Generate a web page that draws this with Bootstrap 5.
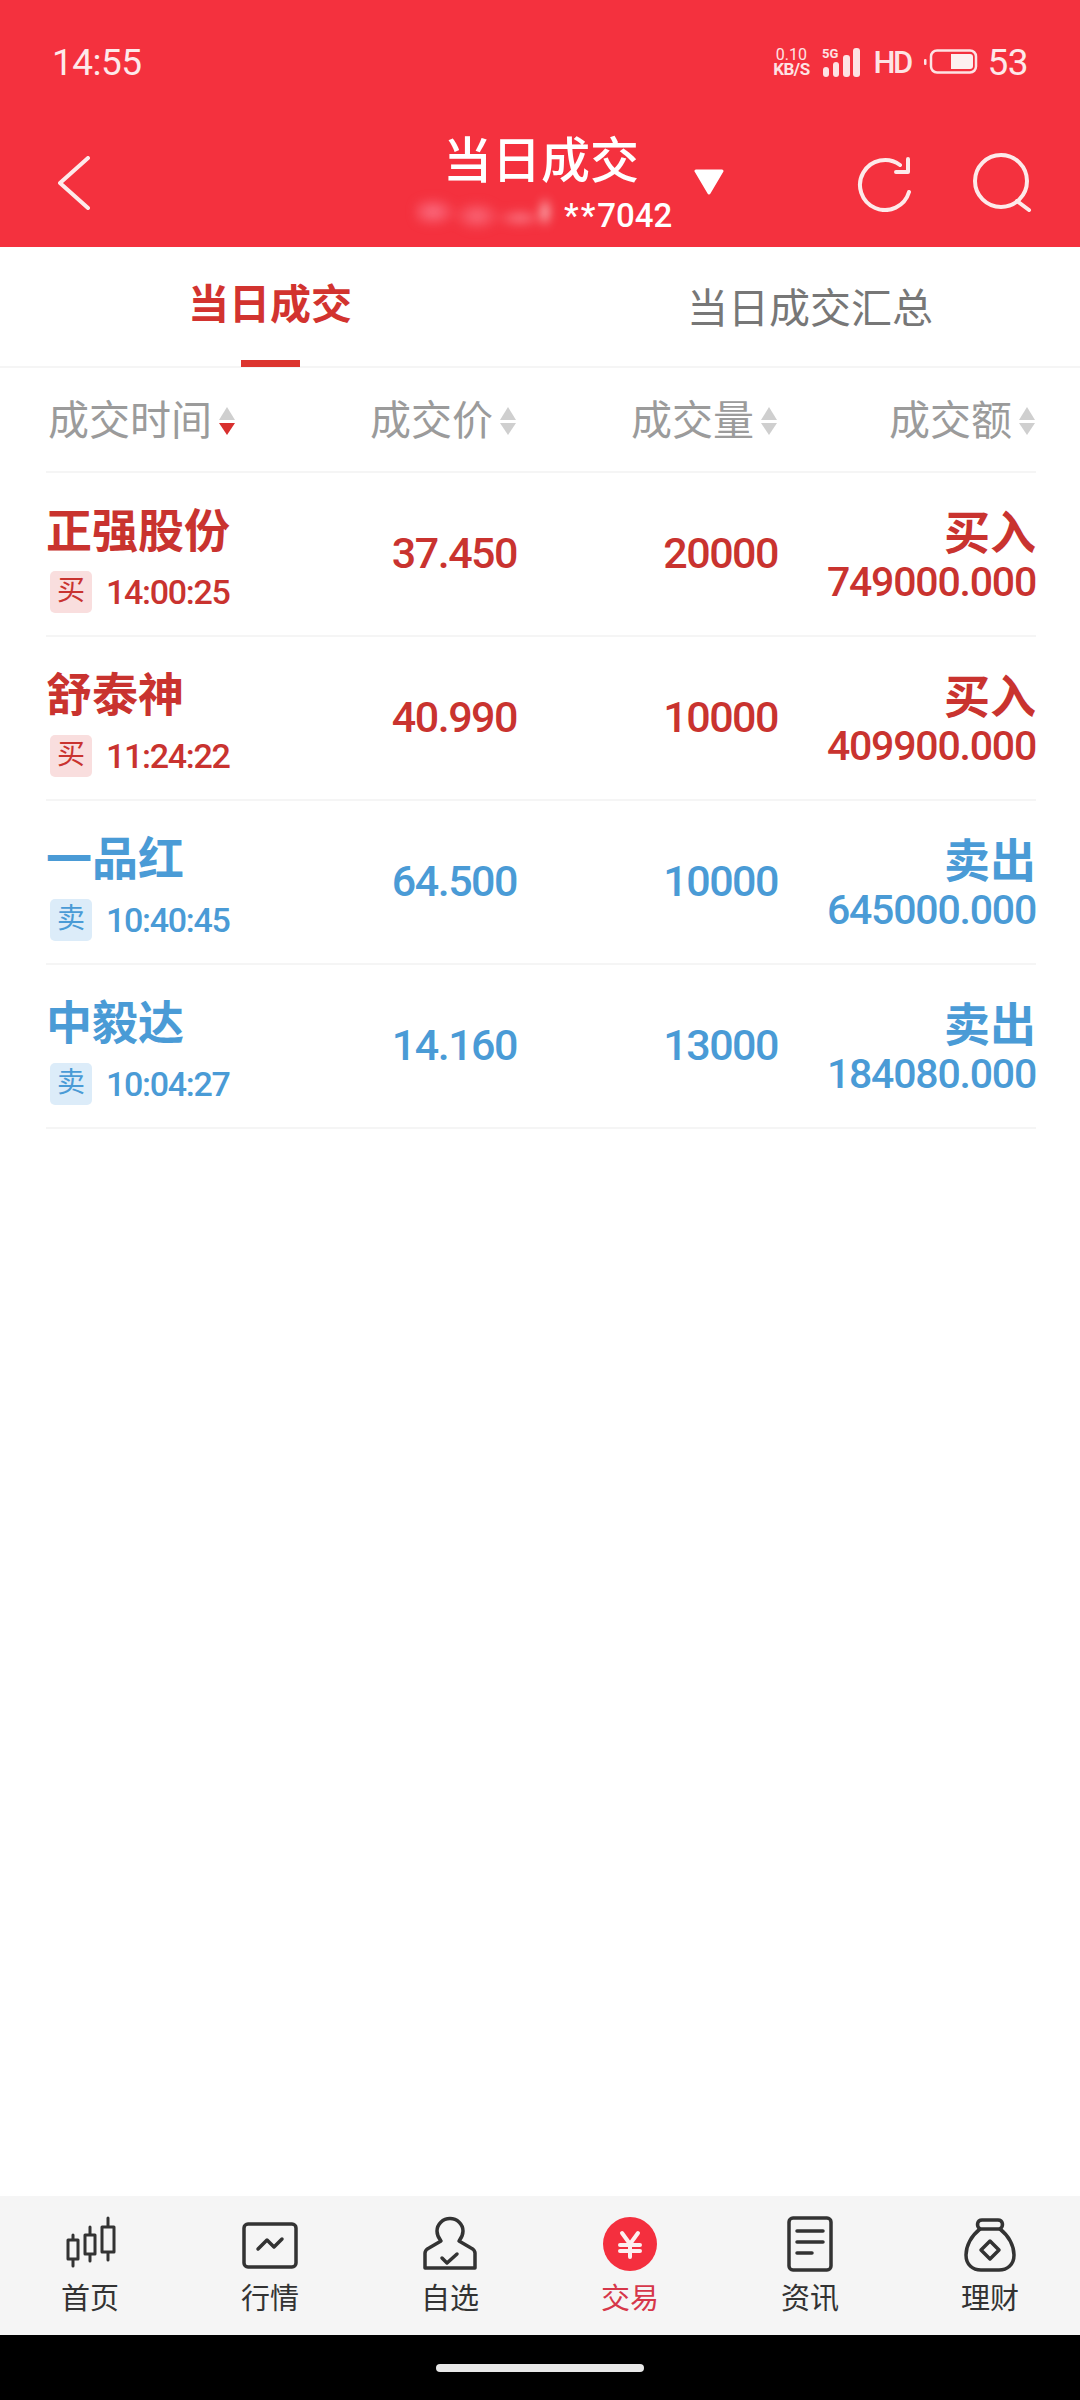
<!doctype html>
<html lang="zh">
<head>
<meta charset="utf-8">
<title>当日成交</title>
<link href="https://cdn.jsdelivr.net/npm/bootstrap@5.3.0/dist/css/bootstrap.min.css" rel="stylesheet">
<style>
html,body{margin:0;padding:0;}
body{width:1080px;height:2400px;overflow:hidden;background:#fff;font-family:Roboto,"Noto Sans CJK SC",sans-serif;}
.app-head{background:#f4313e;color:#fff;height:247px;padding-top:37px;}
.stat-row{height:50px;padding:0 52px;margin-bottom:49px;}
.clock,.batt-num{font-size:37px;line-height:1;color:#fde9ea;letter-spacing:-.5px;}
.net{width:46px;margin-left:auto;color:#fde3e4;text-align:center;white-space:nowrap;}
.net-a{font-size:16px;line-height:15px;}
.net-b{font-size:17px;line-height:15px;font-weight:700;letter-spacing:-.5px;}
.hd-txt{font-size:31px;line-height:1;font-weight:500;color:#fde3e4;margin-left:13px;width:36px;letter-spacing:-2.5px;white-space:nowrap;}
.sig{margin-left:8px;}
.batt{margin-left:15px;}
.batt-num{margin-left:9px;}
.nav-row{height:111px;padding-left:58px;}
.back-i{margin-top:20px;}
.ttl-box{width:260px;margin-left:325px;}
.ttl{font-size:49px;line-height:52px;font-weight:500;text-align:center;color:#fff;padding-right:8px;}
.sub-ttl{height:40px;margin-top:8px;font-size:33px;line-height:40px;font-weight:500;white-space:nowrap;}
.blur-name{width:138px;height:34px;margin-right:11px;filter:blur(5px);background:radial-gradient(ellipse 24px 15px at 18px 16px,#fb7286,transparent),radial-gradient(ellipse 24px 15px at 62px 20px,#f96b7c,transparent),radial-gradient(ellipse 24px 9px at 105px 22px,#fa7a88,transparent),radial-gradient(ellipse 7px 16px at 130px 16px,#fbd3d6,transparent);}
.stars{letter-spacing:2px;}
.tri-i{margin:33px 0 0 18px;}
.ref-i{margin:18px 0 0 131px;}
.srch-i{margin:17px 0 0 60px;}
.tab-bar{height:121px;border-bottom:2px solid #f5f5f5;}
.tab-cell{width:540px;height:119px;}
.tab-on{font-size:41px;font-weight:700;line-height:48px;color:#d2332f;padding-top:34px;}
.tab-off{font-size:41px;font-weight:400;line-height:48px;color:#777;padding-top:38px;}
.tab-line{width:59px;height:7px;background:#dc352f;position:absolute;left:241px;top:113px;}
.tbl{padding:0 44px 0 46px;}
.tr-head{height:105px;padding-top:3px;border-bottom:2px solid #f5f5f5;color:#9b9b9b;font-size:41px;line-height:48px;}
.c1{width:260px;}.c2{width:211px;}.c3{width:261px;}.c4{width:258px;}
.lead-h{padding-left:2px;}
.sort-i{margin-left:6px;flex:none;}
.tr-item{height:164px;border-bottom:2px solid #f5f5f5;}
.c-red{color:#c9332f;}
.c-blue{color:#4a9bd6;}
.nm{font-size:46px;line-height:50px;font-weight:700;padding-top:33px;}
.meta{margin-top:15px;height:42px;padding-left:4px;}
.tag{width:42px;height:42px;border-radius:5px;font-size:28px;line-height:40px;text-align:center;font-weight:400;margin-right:14px;letter-spacing:0;}
.tag-r{background:#f9dede;}
.tag-b{background:#dcecf9;}
.tm{font-size:34px;line-height:42px;font-weight:500;letter-spacing:-1.3px;}
.num{font-size:43px;font-weight:500;line-height:46px;padding-bottom:3px;letter-spacing:-1.5px;}
.dir{font-size:46px;line-height:50px;font-weight:700;padding-top:35px;}
.amt{font-size:41px;line-height:48px;font-weight:500;letter-spacing:-1.2px;}
.dock{height:139px;background:#f5f5f5;margin-top:auto;}
.dock-cell{width:180px;height:139px;}
.dock-ic{height:56px;margin-top:20px;}
.dock-lb{font-size:29px;line-height:36px;color:#333;margin-top:9px;}
.dock-on{color:#d6374a;}
.ink{fill:none;stroke:#333;stroke-width:3.5;stroke-linecap:round;stroke-linejoin:round;}
.homebar{height:65px;background:#000;}
.homepill{width:208px;height:8px;border-radius:4px;background:#e8e8e8;}
</style>
</head>
<body class="d-flex flex-column">
<header class="app-head">
  <div class="stat-row d-flex align-items-center">
    <span class="clock">14:55</span>
    <div class="net"><div class="net-a">0.10</div><div class="net-b">KB/S</div></div>
    <svg class="sig" width="38" height="30" viewBox="0 0 38 30" fill="#fde3e4"><text x="0" y="11" font-size="13" font-weight="700" font-family="Roboto,sans-serif">5G</text><rect x="1" y="20" width="6" height="10" rx="3"/><rect x="11" y="15" width="6" height="15" rx="3"/><rect x="21" y="8" width="7" height="22" rx="3"/><rect x="31" y="1" width="7" height="29" rx="3"/></svg>
    <span class="hd-txt">HD</span>
    <svg class="batt" width="54" height="26" viewBox="0 0 54 26"><rect x="0" y="10" width="2.5" height="6" rx="1" fill="#fde3e4"/><rect x="7" y="1.500" width="45" height="22" rx="6" fill="none" stroke="#fde3e4" stroke-width="2.500"/><path d="M27 5h19a3 3 0 0 1 3 3v9a3 3 0 0 1-3 3H27z" fill="#fdf0f0"/></svg>
    <span class="batt-num">53</span>
  </div>
  <div class="nav-row d-flex align-items-start">
    <svg class="back-i" width="32" height="54" viewBox="0 0 32 54"><polyline points="30,2 2,27 30,52" fill="none" stroke="#fdeaea" stroke-width="4" stroke-linecap="round" stroke-linejoin="round"/></svg>
    <div class="ttl-box">
      <div class="ttl">当日成交</div>
      <div class="sub-ttl d-flex"><span class="blur-name"></span><span class="stars">**</span><span>7042</span></div>
    </div>
    <svg class="tri-i" width="32" height="26" viewBox="0 0 32 26"><path d="M3 2h26l-13 22z" fill="#fff" stroke="#fff" stroke-width="3" stroke-linejoin="round"/></svg>
    <svg class="ref-i" width="56" height="58" viewBox="0 0 56 58"><path d="M53 38A25 25 0 1 1 44 11" fill="none" stroke="#fdeaea" stroke-width="4" stroke-linecap="round"/><polyline points="52,5 52,18 40,18" fill="none" stroke="#fdeaea" stroke-width="4" stroke-linecap="round" stroke-linejoin="round"/></svg>
    <svg class="srch-i" width="60" height="60" viewBox="0 0 60 60"><circle cx="29" cy="28" r="26" fill="none" stroke="#fdeaea" stroke-width="4"/><line x1="45" y1="48" x2="57" y2="57" stroke="#fdeaea" stroke-width="4" stroke-linecap="round"/></svg>
  </div>
</header>

<nav class="tab-bar d-flex position-relative">
  <div class="tab-cell text-center tab-on">当日成交</div>
  <div class="tab-cell text-center tab-off">当日成交汇总</div>
  <span class="tab-line"></span>
</nav>

<main class="tbl">
  <div class="tr-head d-flex align-items-center">
    <div class="c1 lead-h d-flex align-items-center">成交时间<svg class="sort-i" width="18" height="28" viewBox="0 0 18 28"><path d="M9 0l8 13H1z" fill="#cfcfcf"/><path d="M1 16h16l-8 12z" fill="#d8302e"/></svg></div>
    <div class="c2 d-flex align-items-center justify-content-end">成交价<svg class="sort-i" width="18" height="28" viewBox="0 0 18 28"><path d="M9 0l8 13H1z" fill="#cfcfcf"/><path d="M1 16h16l-8 12z" fill="#cfcfcf"/></svg></div>
    <div class="c3 d-flex align-items-center justify-content-end">成交量<svg class="sort-i" width="18" height="28" viewBox="0 0 18 28"><path d="M9 0l8 13H1z" fill="#cfcfcf"/><path d="M1 16h16l-8 12z" fill="#cfcfcf"/></svg></div>
    <div class="c4 d-flex align-items-center justify-content-end">成交额<svg class="sort-i" width="18" height="28" viewBox="0 0 18 28"><path d="M9 0l8 13H1z" fill="#cfcfcf"/><path d="M1 16h16l-8 12z" fill="#cfcfcf"/></svg></div>
  </div>

  <div class="tr-item d-flex c-red">
    <div class="c1"><div class="nm">正强股份</div><div class="meta d-flex"><span class="tag tag-r">买</span><span class="tm">14:00:25</span></div></div>
    <div class="c2 d-flex align-items-center justify-content-end num">37.450</div>
    <div class="c3 d-flex align-items-center justify-content-end num">20000</div>
    <div class="c4 text-end"><div class="dir">买入</div><div class="amt">749000.000</div></div>
  </div>
  <div class="tr-item d-flex c-red">
    <div class="c1"><div class="nm">舒泰神</div><div class="meta d-flex"><span class="tag tag-r">买</span><span class="tm">11:24:22</span></div></div>
    <div class="c2 d-flex align-items-center justify-content-end num">40.990</div>
    <div class="c3 d-flex align-items-center justify-content-end num">10000</div>
    <div class="c4 text-end"><div class="dir">买入</div><div class="amt">409900.000</div></div>
  </div>
  <div class="tr-item d-flex c-blue">
    <div class="c1"><div class="nm">一品红</div><div class="meta d-flex"><span class="tag tag-b">卖</span><span class="tm">10:40:45</span></div></div>
    <div class="c2 d-flex align-items-center justify-content-end num">64.500</div>
    <div class="c3 d-flex align-items-center justify-content-end num">10000</div>
    <div class="c4 text-end"><div class="dir">卖出</div><div class="amt">645000.000</div></div>
  </div>
  <div class="tr-item d-flex c-blue">
    <div class="c1"><div class="nm">中毅达</div><div class="meta d-flex"><span class="tag tag-b">卖</span><span class="tm">10:04:27</span></div></div>
    <div class="c2 d-flex align-items-center justify-content-end num">14.160</div>
    <div class="c3 d-flex align-items-center justify-content-end num">13000</div>
    <div class="c4 text-end"><div class="dir">卖出</div><div class="amt">184080.000</div></div>
  </div>
</main>

<footer class="dock d-flex">
  <div class="dock-cell d-flex flex-column align-items-center">
    <svg class="dock-ic" width="52" height="56" viewBox="0 0 52 56"><g class="ink" style="stroke-width:3"><path d="M9 19v5M9 43v7M4 24h10v19H4zM26 11v8M26 38v7M21 19h10v19H21zM44 2v9M44 36v8M38 11h12v25H38z"/></g></svg>
    <span class="dock-lb">首页</span>
  </div>
  <div class="dock-cell d-flex flex-column align-items-center">
    <svg class="dock-ic" width="56" height="56" viewBox="0 0 56 56"><g class="ink"><rect x="2" y="8" width="52" height="43" rx="4"/><polyline points="16,33 25,24 32,31 40,23"/></g></svg>
    <span class="dock-lb">行情</span>
  </div>
  <div class="dock-cell d-flex flex-column align-items-center">
    <svg class="dock-ic" width="56" height="56" viewBox="0 0 56 56"><g class="ink"><path d="M3 52V37Q3 34 7 32L19 25Q15 20 15 15A13 12.500 0 0 1 41 15Q41 20 37 25L49 32Q53 34 53 37V52Z"/><polyline points="20,42 25,47 35,38"/></g></svg>
    <span class="dock-lb">自选</span>
  </div>
  <div class="dock-cell d-flex flex-column align-items-center">
    <svg class="dock-ic" width="56" height="56" viewBox="0 0 56 56"><circle cx="28" cy="28" r="27" fill="#f42f3e"/><path d="M20 17l8 11 8-11M18 29h20M18 35h20M28 28v13" fill="none" stroke="#fdf0f0" stroke-width="4" stroke-linecap="round"/></svg>
    <span class="dock-lb dock-on">交易</span>
  </div>
  <div class="dock-cell d-flex flex-column align-items-center">
    <svg class="dock-ic" width="46" height="56" viewBox="0 0 46 56"><g class="ink"><rect x="2" y="2" width="42" height="52" rx="4"/><path d="M10 15h26M10 26h26M10 37h15"/></g></svg>
    <span class="dock-lb">资讯</span>
  </div>
  <div class="dock-cell d-flex flex-column align-items-center">
    <svg class="dock-ic" width="52" height="56" viewBox="0 0 52 56"><g class="ink"><path d="M16 13C7 20 2 30 2 39C2 49 9 54 17 54H35C43 54 50 49 50 39C50 30 45 20 36 13"/><path d="M16 13C12 10 13 4 18 4H34C39 4 40 10 36 13Z"/><path d="M26 25l9 9-9 9-9-9z"/></g></svg>
    <span class="dock-lb">理财</span>
  </div>
</footer>
<div class="homebar d-flex justify-content-center align-items-center"><span class="homepill"></span></div>
<script src="https://cdn.jsdelivr.net/npm/bootstrap@5.3.0/dist/js/bootstrap.bundle.min.js"></script>
</body>
</html>
